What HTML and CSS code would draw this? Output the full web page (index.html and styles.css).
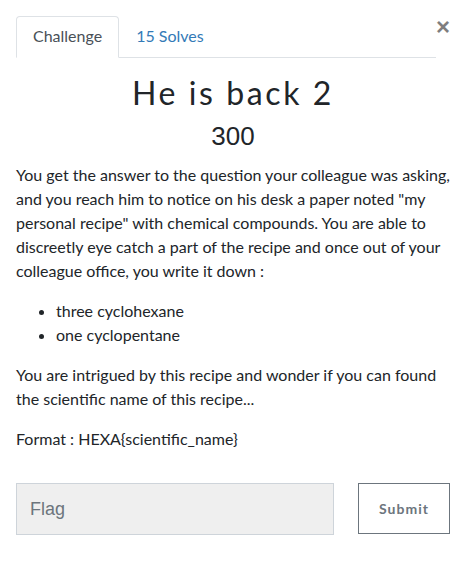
FILE: index.html
```html
<!DOCTYPE html>
<html>
<head>
<meta charset="utf-8">
<link rel="stylesheet" href="styles.css">
</head>
<body>
<div class="modal">
  <div class="header">
    <ul class="tabs">
      <li class="tab active">Challenge</li>
      <li class="tab link">15 Solves</li>
    </ul>
    <button class="close">×</button>
  </div>
  <h2 class="title">He is back 2</h2>
  <h3 class="points">300</h3>
  <div class="desc">
    <p>You get the answer to the question your colleague was asking, and you reach him to notice on his desk a paper noted "my personal recipe" with chemical compounds. You are able to discreetly eye catch a part of the recipe and once out of your colleague office, you write it down :</p>
    <ul class="list">
      <li>three cyclohexane</li>
      <li>one cyclopentane</li>
    </ul>
    <p>You are intrigued by this recipe and wonder if you can found the scientific name of this recipe...</p>
    <p>Format : HEXA{scientific_name}</p>
  </div>
  <div class="form">
    <input class="flag" type="text" placeholder="Flag">
    <button class="submit">Submit</button>
  </div>
</div>
</body>
</html>
```
FILE: styles.css
```css
* { box-sizing: border-box; }
body {
  margin: 0;
  background: #fff;
  font-family: Lato, "Noto Sans", sans-serif;
  color: #212529;
  font-size: 16px;
  line-height: 24px;
}
.modal {
  padding: 16px 16px 0 16px;
}
.header {
  display: flex;
  align-items: flex-start;
}
.tabs {
  flex: 1;
  display: flex;
  margin: 0;
  padding: 0;
  list-style: none;
  border-bottom: 1px solid #dee2e6;
}
.tab {
  padding: 7px 16px 9px;
  border: 1px solid transparent;
  border-radius: 4px 4px 0 0;
  margin-bottom: -1px;
}
.tab.active {
  border-color: #dee2e6 #dee2e6 #fff;
  color: #495057;
  background: #fff;
}
.tab.link {
  color: #337ab7;
}
.close {
  background: none;
  border: 0;
  padding: 0;
  width: 14px;
  margin-top: -1px;
  font-family: "Liberation Sans", Arial, sans-serif;
  font-size: 24px;
  font-weight: 700;
  line-height: 24px;
  color: #000;
  opacity: .5;
}
.title {
  margin: 16px 0 0;
  text-align: center;
  font-family: Lato, sans-serif;
  font-weight: 400;
  font-size: 32px;
  line-height: 38px;
  letter-spacing: 2.6px;
  color: #212529;
}
.points {
  margin: 8px 0 0;
  text-align: center;
  font-family: "Liberation Sans", Arial, sans-serif;
  font-weight: 400;
  font-size: 26px;
  line-height: 32px;
}
.desc {
  margin-top: 11px;
}
.desc p {
  margin: 0 0 16px;
}
.list {
  margin: 0 0 16px;
  padding-left: 40px;
}
.form {
  display: flex;
  align-items: flex-start;
  margin-top: 32px;
  gap: 24px;
}
.flag {
  width: 318px;
  height: 52px;
  background: #efefef;
  border: 1px solid #ced4da;
  padding: 0 13px;
  font-family: "Liberation Sans", Arial, sans-serif;
  font-size: 18px;
  color: #495057;
}
.flag::placeholder { color: #6c757d; }
.submit {
  width: 92px;
  height: 51px;
  background: #fff;
  border: 1px solid #6c757d;
  font-family: Lato, sans-serif;
  font-weight: 700;
  font-size: 14px;
  letter-spacing: 1px;
  color: #6c757d;
}
```
